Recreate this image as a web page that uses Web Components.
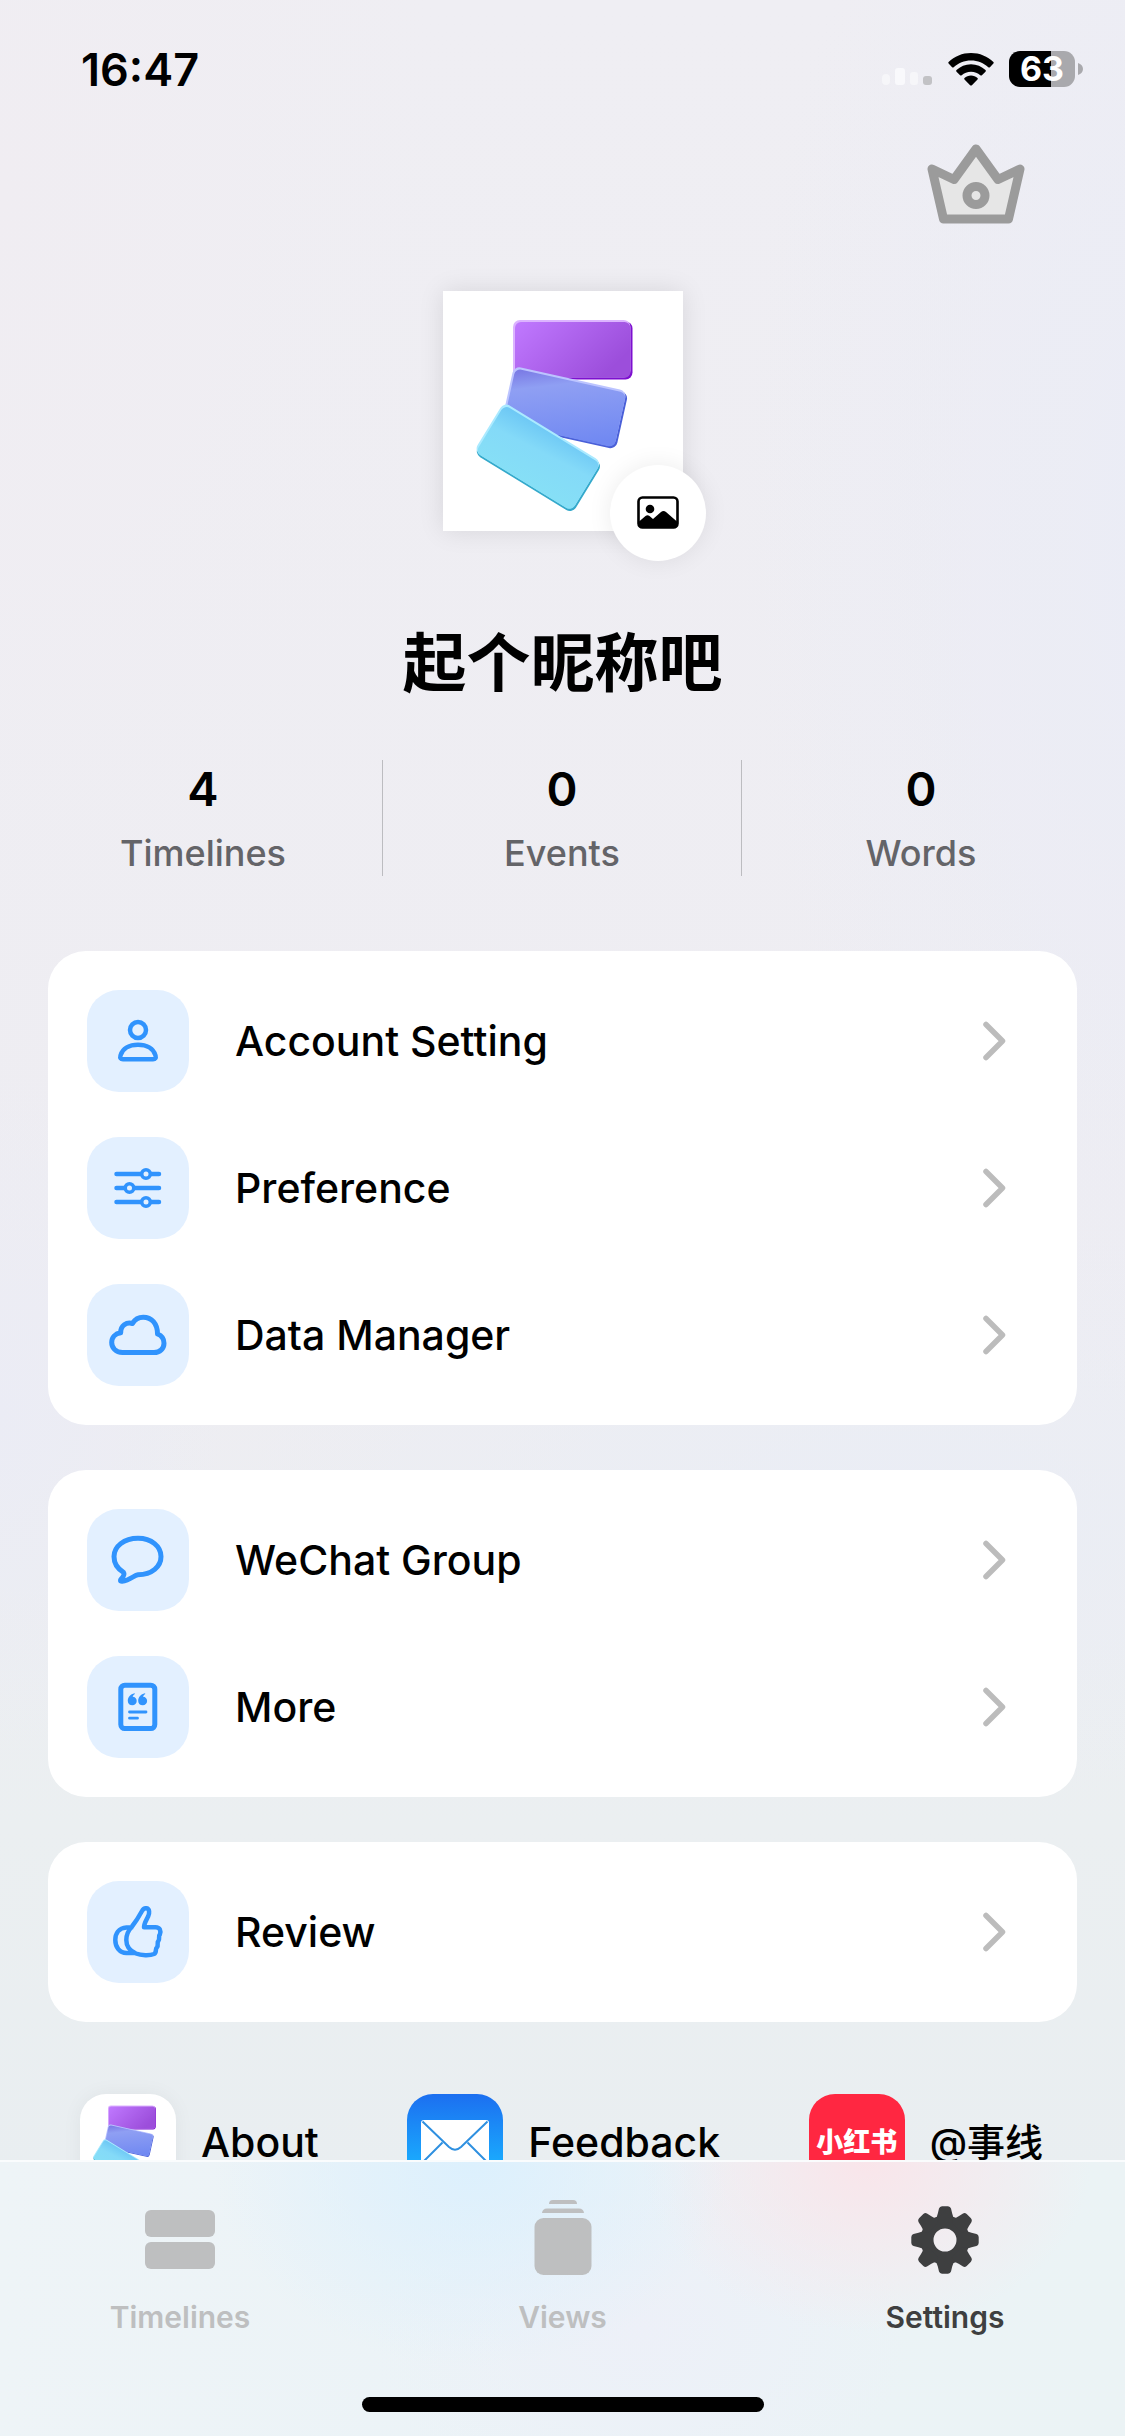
<!DOCTYPE html>
<html lang="en">
<head>
<meta charset="utf-8">
<meta name="viewport" content="width=device-width, initial-scale=1">
<title>Settings</title>
<style>
  html, body { margin: 0; height: 100%; }
  body {
    font-family: Inter, "Noto Sans CJK SC", sans-serif;
    font-weight: 500;
    color: #000;
    --accent: #3093fd;
    --tile: #e3f0ff;
  }
</style>
</head>
<body>
<settings-screen>
  <status-bar slot="status" battery="63">16:47</status-bar>
  <profile-header slot="profile">
    <span slot="name">起个昵称吧</span>
    <stat-item slot="stats" value="4">Timelines</stat-item>
    <stat-item slot="stats" value="0">Events</stat-item>
    <stat-item slot="stats" value="0">Words</stat-item>
  </profile-header>
  <menu-card>
    <menu-row icon="account">Account Setting</menu-row>
    <menu-row icon="sliders">Preference</menu-row>
    <menu-row icon="cloud">Data Manager</menu-row>
  </menu-card>
  <menu-card>
    <menu-row icon="chat">WeChat Group</menu-row>
    <menu-row icon="note">More</menu-row>
  </menu-card>
  <menu-card>
    <menu-row icon="thumb">Review</menu-row>
  </menu-card>
  <app-links slot="links">
    <app-link><app-logo slot="icon"></app-logo>About</app-link>
    <app-link><mail-logo slot="icon"></mail-logo>Feedback</app-link>
    <app-link lang="zh"><red-logo slot="icon">小红书</red-logo>@事线</app-link>
  </app-links>
  <tab-bar slot="tabs">
    <tab-item icon="timelines">Timelines</tab-item>
    <tab-item icon="views">Views</tab-item>
    <tab-item icon="gear" selected>Settings</tab-item>
  </tab-bar>
</settings-screen>

<script>
  const define = (name, render) => customElements.define(name, class extends HTMLElement {
    constructor() {
      super();
      this.attachShadow({ mode: 'open' }).innerHTML = render(this);
    }
  });

  const svg = (w, h, body, vb) => `<svg width="${w}" height="${h}" viewBox="${vb || `0 0 ${w} ${h}`}" fill="none" aria-hidden="true">${body}</svg>`;

  /* Three fanned cards: each has a lit edge, a dark edge and a face. */
  const cardsArt = (size) => {
    const card = (t, w, light, dark, face) => `<g transform="${t}">
      <rect x="1.5" y="1.5" width="${w}" height="58" rx="7" fill="${dark}"/>
      <rect width="${w - 0.5}" height="57.5" rx="7" fill="${light}"/>
      <rect x="2" y="2" width="${w - 2.5}" height="55.8" rx="6" fill="url(#${face})"/></g>`;
    return svg(size, size, `
      <defs>
        <linearGradient id="p" x1="0" y1="0" x2="1" y2="0.5"><stop stop-color="#c079ff"/><stop offset="1" stop-color="#9c4edb"/></linearGradient>
        <linearGradient id="b" x1="0.1" y1="0" x2="0.8" y2="1"><stop stop-color="#7c7de6"/><stop offset=".22" stop-color="#8f9ff3"/><stop offset="1" stop-color="#7189f2"/></linearGradient>
        <linearGradient id="c" x1="0.3" y1="0" x2="0.45" y2="1"><stop stop-color="#6fc9f5"/><stop offset=".4" stop-color="#84daf8"/><stop offset="1" stop-color="#86dff6"/></linearGradient>
      </defs>
      ${card('translate(70 29)', 118, '#dcb4ff', '#7d10cf', 'p')}
      ${card('translate(71 75) rotate(12.5)', 116, '#bcc4ff', '#4a60d8', 'b')}
      ${card('translate(61 111) rotate(31.5)', 115, '#abeaff', '#35a9cb', 'c')}`, '0 0 240 240');
  };

  define('settings-screen', () => `
    <style>
      :host {
        display: flex; flex-direction: column; height: 100vh;
        background:
          radial-gradient(ellipse 42% 38% at 108% 22%, #eaecf6 0, #eaecf600 100%),
          radial-gradient(ellipse 20% 14% at 0% 58%, #ebecf5 0, #ebecf500 100%),
          radial-gradient(ellipse 60% 12% at 80% 62%, #eaedf5 0, #eaedf500 100%),
          radial-gradient(ellipse 40% 30% at 0% 8%, #f0edf2 0, #f0edf200 100%),
          linear-gradient(#efeef3 0%, #eeedf2 55%, #ebeff1 75%, #e9eef1 90%);
      }
      main { flex: 1; min-height: 0; overflow-y: auto; scrollbar-width: none; }
      main::-webkit-scrollbar { display: none; }
      .cards { display: flex; flex-direction: column; gap: 45px; margin: 75px 48px 72px; }
    </style>
    <main>
      <slot name="status"></slot>
      <slot name="profile"></slot>
      <div class="cards"><slot></slot></div>
      <slot name="links"></slot>
    </main>
    <slot name="tabs"></slot>`);

  define('status-bar', (el) => `
    <style>
      :host { display: flex; align-items: center; justify-content: space-between; height: 138px; padding: 0 42px 0 81px; font-size: 45px; font-weight: 600; }
      .right { display: flex; align-items: center; gap: 15px; }
      .battery { display: flex; align-items: center; gap: 3px; }
      .level { width: 66px; height: 36px; line-height: 36px; border-radius: 11px; text-align: center; font-size: 34px; font-weight: 700; color: #fff; background: linear-gradient(90deg, #000 63%, #a9a9ad 63%); }
      svg { display: block; }
    </style>
    <time><slot></slot></time>
    <div class="right">
      ${svg(52, 36, `<rect x="1" y="23" width="8" height="11" rx="4" fill="#f6f6f9"/><rect x="14" y="17" width="10" height="17" rx="3" fill="#f9f9fc"/><rect x="29" y="21" width="8" height="13" rx="3" fill="#f6f6f9"/><rect x="42" y="25" width="9" height="9" rx="3" fill="#c2c2c5"/>`)}
      ${svg(46, 36, `<g fill="#000"><path d="M23 2c8.700 0 16.600 3.400 22.400 9 .5.500.5 1.100 0 1.600l-3.500 3.600c-.5.500-1.100.5-1.600 0C35.800 12 29.700 9.400 23 9.400S10.200 12 5.700 16.200c-.5.500-1.100.5-1.600 0L.6 12.600c-.5-.5-.5-1.100 0-1.600C6.400 5.400 14.300 2 23 2z"/><path d="M23 13.300c5.600 0 10.700 2.200 14.500 5.800.5.500.5 1.100 0 1.600l-3.600 3.500c-.5.500-1.100.5-1.600 0-2.400-2.200-5.700-3.500-9.300-3.500s-6.900 1.300-9.300 3.500c-.5.500-1.100.5-1.600 0l-3.600-3.500c-.5-.5-.5-1.100 0-1.600 3.800-3.600 8.900-5.800 14.500-5.800z"/><path d="M23 24.500c2.500 0 4.800.9 6.500 2.400.5.500.5 1.100 0 1.600l-5.600 5.700c-.5.500-1.300.5-1.800 0l-5.600-5.700c-.5-.5-.5-1.100 0-1.600 1.700-1.500 4-2.400 6.500-2.400z"/></g>`)}
      <div class="battery"><span class="level">${el.getAttribute('battery')}</span>${svg(5, 12, '<path d="M0 0c3 1 5 3 5 6s-2 5-5 6z" fill="#a9a9ad"/>')}</div>
    </div>`);

  define('profile-header', () => `
    <style>
      :host { display: flex; flex-direction: column; }
      button { border: 0; padding: 0; background: none; cursor: pointer; }
      svg { display: block; }
      .crown { align-self: flex-end; margin: 6px 100px 67px 0; }
      .avatar { position: relative; align-self: center; background: #fff; box-shadow: 0 0 24px #0000001a; }
      .edit { position: absolute; right: -23px; bottom: -30px; width: 96px; height: 96px; border-radius: 50%; background: #fff; display: grid; place-items: center; box-shadow: 0 0 24px #00000014; }
      h1 { margin: 84px 0 49px; text-align: center; font-size: 64px; line-height: 96px; font-weight: 700; }
      .stats { display: grid; grid-template-columns: repeat(3, 1fr); padding: 0 24px; }
    </style>
    <button class="crown" aria-label="Membership">${svg(98, 80, `<path d="M5 25 L27 35.500 L49 5 L71 35.500 L93 25 L81.500 75 H16.500 Z" fill="#e6e6e6" stroke="#9b9b9b" stroke-width="9" stroke-linejoin="round"/><circle cx="49" cy="51.500" r="9" stroke="#9b9b9b" stroke-width="9"/>`)}</button>
    <div class="avatar">${cardsArt(240)}
      <button class="edit" aria-label="Change picture">${svg(42, 34, `<rect x="1.500" y="1.500" width="39" height="30" rx="4" stroke="#000" stroke-width="2.600"/><circle cx="13" cy="13" r="4.300" fill="#000"/><path d="M1.500 26 L8.500 20 Q10.500 18.500 12.500 20 L16 23 L24 16 Q26.500 14 29 16 L40.500 26 V29 Q40.500 32 37 32 H5 Q1.500 32 1.500 29 Z" fill="#000"/>`)}</button>
    </div>
    <h1><slot name="name"></slot></h1>
    <div class="stats"><slot name="stats"></slot></div>`);

  define('stat-item', (el) => `
    <style>
      :host { display: flex; flex-direction: column; gap: 12px; align-items: center; border-right: 1px solid #bcbcc0; }
      :host(:last-of-type) { border-right-color: transparent; }
      b { font-size: 47px; line-height: 58px; font-weight: 600; }
      span { font-size: 36px; line-height: 46px; color: #646468; }
    </style>
    <b>${el.getAttribute('value')}</b><span><slot></slot></span>`);

  define('menu-card', () => `
    <style>:host { display: flex; flex-direction: column; gap: 45px; padding: 39px; border-radius: 38px; background: #fff; }</style>
    <slot></slot>`);

  const rowIcons = {
    account: `<circle cx="51" cy="40" r="8"/><path d="M36 69.300 H66 Q69.500 69.300 68.500 65.500 C66.500 58.500 59.500 54.800 51 54.800 S35.500 58.500 33.500 65.500 Q32.500 69.300 36 69.300 Z"/>`,
    sliders: `<path d="M29.500 37H72M29.500 51H72M29.500 65H72"/><g fill="#e3f0ff" stroke-width="3.600"><circle cx="59" cy="37" r="4.300"/><circle cx="42.500" cy="51" r="4.300"/><circle cx="59" cy="65" r="4.300"/></g>`,
    cloud: `<path stroke-width="5" d="M35.500 68.500 C28.500 68.500 24.700 63.500 24.700 58.500 C24.700 53.200 28.500 49.500 33.700 48.700 C33.500 41.500 39.500 37.800 45.500 39.500 C48 35.300 52 33.300 56.200 33.300 C64.500 33.300 70.500 39.500 70.500 50 C74.500 51.500 77 55 77 59.200 C77 64.500 73 68.500 67 68.500 Z"/>`,
    chat: `<path stroke-width="5" d="M51 29.300 C64.500 29.300 74 37.500 74 47.500 C74 57.500 65 65.700 51 65.700 C47 66 43.500 71.500 35 72.200 C33 72.200 33.200 71.200 34.300 69.900 C36.500 67.500 38 65.500 36.500 63.300 C31 60 27 54.500 27 47.500 C27 37.500 37 29.300 51 29.300 Z"/>`,
    note: `<rect x="33.800" y="29.200" width="34" height="43.400" rx="4" stroke-width="5"/><path stroke-width="2.800" d="M42.500 56H59M42.500 62.200H50.500"/><g fill="#3093fd" stroke="none"><path id="q" d="M47.500 37.300 C43.500 38.300 40.800 41.200 40.800 44.900 C40.800 47.500 42.800 49.300 45.300 49.300 C47.800 49.300 49.700 47.400 49.700 45 C49.700 42.600 47.900 40.900 45.700 40.800 C45.900 39.500 46.700 38.700 48 38 Z"/><use href="#q" x="10.400"/></g>`,
    thumb: `<path d="M59.500 27.300 C62.800 28 62.500 32 61.300 35 C59.500 39 57 42.500 57 46.200 H68.500 C73 46.200 74.300 50 72.800 53.500 C71 55 73.300 57.500 71.300 60 C69.500 61.500 72 64 69.800 66.500 C68 68 70 71.500 67 73 C63 74.700 54 74.500 49 72.500 C42 69.500 39.300 64.500 39.300 59 C39.300 53 41.700 49 45 45.500 C49 40.500 52 35.500 55 30 C56.300 27.500 58 27 59.500 27.300 Z M44.500 46.500 H39.500 C31.500 47 28.300 53 28.300 59 C28.300 66 32.500 72 39.500 72 H47"/>`
  };

  define('menu-row', (el) => `
    <style>
      :host { display: block; }
      a { display: flex; align-items: center; gap: 46px; color: inherit; text-decoration: none; font-size: 41px; line-height: 56px; }
      .tile { display: block; width: 102px; height: 102px; border-radius: 32px; background: var(--tile); }
      svg { display: block; }
      .label { flex: 1; }
      .chevron { margin-right: 31px; }
    </style>
    <a href="#${el.getAttribute('icon')}">
      <span class="tile">${svg(102, 102, `<g stroke="#3093fd" stroke-width="4.500" stroke-linecap="round" stroke-linejoin="round">${rowIcons[el.getAttribute('icon')]}</g>`)}</span>
      <span class="label"><slot></slot></span>
      <span class="chevron">${svg(24, 42, '<path d="M3 4.500 L19.500 21 L3 37.500" stroke="#bcbcbc" stroke-width="5.500" stroke-linecap="round" stroke-linejoin="round"/>')}</span>
    </a>`);

  define('app-links', () => `
    <style>:host { display: flex; justify-content: space-between; padding: 0 82px 0 80px; }</style>
    <slot></slot>`);

  define('app-link', () => `
    <style>
      :host { display: block; }
      a { display: flex; align-items: center; gap: 25px; color: inherit; text-decoration: none; font-size: 41px; line-height: 56px; white-space: nowrap; }
      :host([lang="zh"]) a { font-size: 38px; }
    </style>
    <a href="#"><slot name="icon"></slot><span><slot></slot></span></a>`);

  const tile = 'display: block; width: 96px; height: 96px; border-radius: 26px; overflow: hidden;';
  define('app-logo', () => `<style>:host { ${tile} background: #fff; box-shadow: 0 0 20px #0000000d; }</style>${cardsArt(96)}`);
  define('mail-logo', () => `<style>:host { ${tile} background: linear-gradient(#1c6ff0, #1aa7fd 68%, #1ac0ff); }</style>
    ${svg(96, 96, `<rect x="14" y="26" width="68" height="46" rx="3" fill="#fff"/><path d="M15.500 27.500 L42 53 Q48 58.500 54 53 L80.500 27.500 M35.500 48.500 L16 68 M60.500 48.500 L80 68" stroke="#2f90e0" stroke-width="2"/>`)}`);
  define('red-logo', () => `<style>:host { ${tile} background: #ff2741; color: #fff; font: 900 27px/94px "Noto Sans CJK SC", sans-serif; text-align: center; }</style><slot></slot>`);

  define('tab-bar', () => `
    <style>
      :host {
        display: flex; flex-direction: column; flex: none; box-sizing: border-box; height: 276px; border-top: 2px solid #fafcfd;
        background:
          radial-gradient(ellipse 23% 75% at 42% 0%, #dcf0fd 0, #dcf0fd00 100%),
          radial-gradient(ellipse 20% 62% at 77% 0%, #f9e5ea 0, #f9e5ea00 100%),
          radial-gradient(ellipse 24% 70% at 57% 62%, #edf0f8 0, #edf0f800 100%),
          linear-gradient(90deg, #eef4f7, #ebf3f7 50%, #ebf3f5);
      }
      nav { display: flex; justify-content: space-between; padding: 33px 48px 0; flex: 1; }
      .home { align-self: center; width: 402px; height: 15px; margin-bottom: 24px; border-radius: 8px; background: #000; }
    </style>
    <nav><slot></slot></nav><div class="home"></div>`);

  const tabIcons = {
    timelines: '<rect x="5" y="15" width="70" height="27" rx="6"/><rect x="5" y="47" width="70" height="27" rx="6"/>',
    views: '<path d="M26 9 Q26 5 30 5 H50 Q54 5 54 9 Z M19 18 Q19.500 13.500 24 13.500 H56 Q60.500 13.500 61 18 Z"/><rect x="11.500" y="23" width="57" height="57" rx="9"/>',
    gear: `<circle cx="40" cy="45" r="18" fill="none" stroke="currentColor" stroke-width="13"/>${[0, 45, 90, 135, 180, 225, 270, 315].map(a => `<path transform="rotate(${a} 40 45)" d="M30 24 Q32.300 22 32.800 18.500 L34 13.500 Q34.600 11.500 37 11.300 H43 Q45.400 11.500 46 13.500 L47.200 18.500 Q47.700 22 50 24 L46 28 H34 Z"/>`).join('')}`
  };
  define('tab-item', (el) => `
    <style>
      :host { display: block; width: 264px; color: #bebfc0; }
      :host([selected]) { color: #3e3f40; }
      a { display: flex; flex-direction: column; align-items: center; gap: 20px; color: inherit; text-decoration: none; font-size: 30px; line-height: 40px; font-weight: 600; }
    </style>
    <a href="#${el.getAttribute('icon')}">${svg(80, 82, `<g fill="currentColor">${tabIcons[el.getAttribute('icon')]}</g>`)}<span><slot></slot></span></a>`);
</script>
</body>
</html>
